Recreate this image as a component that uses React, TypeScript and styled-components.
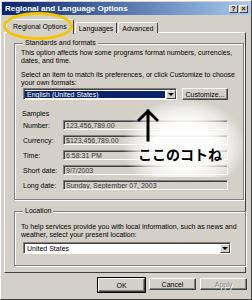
import styled, { createGlobalStyle } from "styled-components";

const GlobalStyle = createGlobalStyle`
  html, body {
    margin: 0;
    padding: 0;
    background: #d4d0c8;
  }
  body {
    font-family: "Liberation Sans", Arial, sans-serif;
    font-size: 7px;
    color: #000;
  }
`;

const Window = styled.div`
  position: relative;
  box-sizing: border-box;
  width: 252px;
  height: 300px;
  display: flex;
  flex-direction: column;
  background: #d4d0c8;
  border: 1px solid;
  border-color: #ffffff #404040 #404040 #ffffff;
  overflow: hidden;
`;

const TitleBar = styled.div`
  margin: 1px 1px 0 1px;
  height: 13px;
  display: flex;
  align-items: center;
  padding: 0 2px 0 3px;
  background: linear-gradient(to right, #0a246a, #a6caf0);
`;

const Title = styled.div`
  flex: 1;
  color: #fff;
  font-weight: bold;
  font-size: 8px;
`;

const TitleButton = styled.div`
  box-sizing: border-box;
  width: 9px;
  height: 8px;
  margin-left: 1px;
  background: #d4d0c8;
  border: 1px solid;
  border-color: #fff #404040 #404040 #fff;
  font-size: 7px;
  font-weight: bold;
  line-height: 6px;
  text-align: center;
`;

const Tabs = styled.div`
  display: flex;
  align-items: flex-end;
  height: 14px;
  margin: 4px 0 0 5px;
  position: relative;
  z-index: 1;
`;

const Tab = styled.div<{ $active?: boolean }>`
  box-sizing: border-box;
  height: ${(p) => (p.$active ? 15 : 11)}px;
  padding: 0 ${(p) => (p.$active ? 6 : 3)}px;
  margin-right: 1px;
  display: flex;
  align-items: center;
  background: #d4d0c8;
  border: 1px solid;
  border-bottom: none;
  border-color: #fff #404040 transparent #fff;
  border-radius: 2px 2px 0 0;
  ${(p) => (p.$active ? "margin-bottom: -1px; padding-bottom: 1px;" : "")}
`;

const Panel = styled.div`
  box-sizing: border-box;
  height: 241px;
  margin: -1px 5px 0 3px;
  padding: 6px 5px 0 9px;
  border: 1px solid;
  border-color: #fff #404040 #404040 #fff;
`;

const Group = styled.fieldset<{ $gap?: number; $bottom?: number }>`
  margin: ${(p) => p.$gap ?? 0}px 0 0 0;
  padding: 2px 8px ${(p) => p.$bottom ?? 9}px 6px;
  border: 1px solid #808080;
  box-shadow: 1px 1px 0 #fff, inset 1px 1px 0 #fff;
`;

const Legend = styled.legend`
  padding: 0 2px;
  margin-left: 2px;
  line-height: 8px;
  background: #d4d0c8;
`;

const Text = styled.p<{ $gap?: number }>`
  margin: ${(p) => p.$gap ?? 0}px 0 0 0;
  line-height: 8px;
  white-space: nowrap;
`;

const Row = styled.div<{ $gap?: number }>`
  display: flex;
  align-items: center;
  margin-top: ${(p) => p.$gap ?? 0}px;
`;

const Select = styled.div<{ $width: number }>`
  box-sizing: border-box;
  width: ${(p) => p.$width}px;
  height: 12px;
  margin-left: 2px;
  display: flex;
  align-items: stretch;
  background: #fff;
  border: 1px solid;
  border-color: #808080 #fff #fff #808080;
  box-shadow: inset 1px 1px 0 #404040;
  padding: 1px 0 0 1px;
`;

const SelectValue = styled.div<{ $selected?: boolean }>`
  flex: 1;
  display: flex;
  align-items: center;
  padding-left: 2px;
  background: ${(p) => (p.$selected ? "#0a246a" : "#fff")};
  color: ${(p) => (p.$selected ? "#fff" : "#000")};
  margin: 1px 1px 1px 0;
`;

const DropButton = styled.div`
  box-sizing: border-box;
  width: 10px;
  background: #d4d0c8;
  border: 1px solid;
  border-color: #fff #404040 #404040 #fff;
  display: flex;
  align-items: center;
  justify-content: center;
`;

const Button = styled.div<{ $default?: boolean; $disabled?: boolean; $width?: number }>`
  box-sizing: border-box;
  width: ${(p) => p.$width ?? 47}px;
  height: ${(p) => (p.$default ? 14 : 12)}px;
  display: flex;
  align-items: center;
  justify-content: center;
  background: #d4d0c8;
  border: 1px solid;
  border-color: #fff #404040 #404040 #fff;
  box-shadow: inset -1px -1px 0 #808080;
  color: ${(p) => (p.$disabled ? "#808080" : "#000")};
  text-shadow: ${(p) => (p.$disabled ? "1px 1px 0 #fff" : "none")};
  ${(p) => (p.$default ? "outline: 1px solid #000;" : "")}
`;

const SamplesTitle = styled.div`
  margin: 10px 0 0 1px;
  line-height: 8px;
`;

const Samples = styled.div`
  display: flex;
  flex-direction: column;
  gap: 5px;
  margin-top: 2px;
`;

const SampleRow = styled.div`
  display: flex;
  align-items: center;
  height: 10px;
`;

const SampleLabel = styled.div`
  width: 40px;
  padding-left: 2px;
`;

const SampleField = styled.div`
  box-sizing: border-box;
  width: 165px;
  height: 10px;
  display: flex;
  align-items: center;
  padding-left: 2px;
  color: #333;
  border: 1px solid;
  border-color: #808080 #fff #fff #808080;
  box-shadow: inset 1px 1px 0 #404040;
  white-space: nowrap;
  overflow: hidden;
`;

const Footer = styled.div`
  display: flex;
  justify-content: flex-end;
  gap: 4px;
  margin: 5px 4px 0 0;
`;

const Highlight = styled.div`
  position: absolute;
  z-index: 2;
  left: 2px;
  top: 11px;
  width: 64px;
  height: 22px;
  border: 3px solid #f6c400;
  border-radius: 50%;
  pointer-events: none;
`;

const Glow = styled.div`
  position: absolute;
  z-index: 2;
  left: 122px;
  top: 98px;
  width: 122px;
  height: 78px;
  background: radial-gradient(
    ellipse at 50% 60%,
    rgba(255, 255, 255, 0.95) 35%,
    rgba(255, 255, 255, 0.6) 55%,
    rgba(255, 255, 255, 0) 72%
  );
`;

const ArrowMark = styled.svg`
  position: absolute;
  z-index: 3;
  left: 136px;
  top: 106px;
`;

const Note = styled.div`
  position: absolute;
  z-index: 3;
  left: 137px;
  top: 145px;
  font-family: "Noto Sans CJK JP", sans-serif;
  font-size: 14px;
  font-weight: bold;
  line-height: 16px;
  color: #000;
  text-shadow: 0 0 3px #fff, 0 0 5px #fff;
  white-space: nowrap;
`;

function Arrow() {
  return (
    <svg width="6" height="4" viewBox="0 0 6 4">
      <path d="M0 0 H6 L3 3 Z" fill="#000" />
    </svg>
  );
}

const samples = [
  ["Number:", "123,456,789.00"],
  ["Currency:", "$123,456,789.00"],
  ["Time:", "6:58:31 PM"],
  ["Short date:", "9/7/2003"],
  ["Long date:", "Sunday, September 07, 2003"],
];

export default function App() {
  return (
    <>
      <GlobalStyle />
      <Window>
        <TitleBar>
          <Title>Regional and Language Options</Title>
          <TitleButton>?</TitleButton>
          <TitleButton>×</TitleButton>
        </TitleBar>
        <Tabs>
          <Tab $active>Regional Options</Tab>
          <Tab>Languages</Tab>
          <Tab>Advanced</Tab>
        </Tabs>
        <Panel>
          <Group>
            <Legend>Standards and formats</Legend>
            <Text>
              This option affects how some programs format numbers, currencies,
              <br />
              dates, and time.
            </Text>
            <Text $gap={6}>
              Select an item to match its preferences, or click Customize to choose
              <br />
              your own formats:
            </Text>
            <Row $gap={1}>
              <Select $width={154}>
                <SelectValue $selected>English (United States)</SelectValue>
                <DropButton>
                  <Arrow />
                </DropButton>
              </Select>
              <Button $width={46} style={{ marginLeft: 5 }}>
                Customize...
              </Button>
            </Row>
            <SamplesTitle>Samples</SamplesTitle>
            <Samples>
              {samples.map(([label, value]) => (
                <SampleRow key={label}>
                  <SampleLabel>{label}</SampleLabel>
                  <SampleField>{value}</SampleField>
                </SampleRow>
              ))}
            </Samples>
          </Group>
          <Group $gap={7} $bottom={11}>
            <Legend>Location</Legend>
            <Text $gap={6}>
              To help services provide you with local information, such as news and
              <br />
              weather, select your present location:
            </Text>
            <Row $gap={3}>
              <Select $width={208}>
                <SelectValue>United States</SelectValue>
                <DropButton>
                  <Arrow />
                </DropButton>
              </Select>
            </Row>
          </Group>
        </Panel>
        <Footer>
          <Button $default>OK</Button>
          <Button>Cancel</Button>
          <Button $disabled>Apply</Button>
        </Footer>
        <Highlight />
        <Glow />
        <ArrowMark width="22" height="36" viewBox="0 0 22 36">
          <path
            d="M11 4 V33 M2 13 L11 4 L20 13"
            stroke="#000"
            strokeWidth="3"
            fill="none"
            strokeLinecap="square"
          />
        </ArrowMark>
        <Note>ここのコトね</Note>
      </Window>
    </>
  );
}
